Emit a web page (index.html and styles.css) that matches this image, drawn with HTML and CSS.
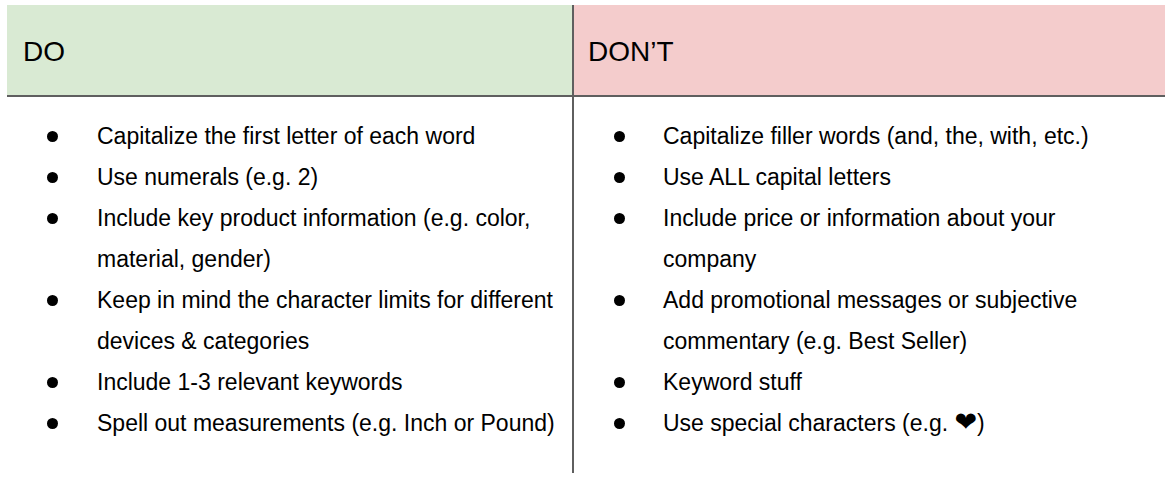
FILE: index.html
```html
<!DOCTYPE html>
<html>
<head>
<meta charset="utf-8">
<link rel="stylesheet" href="styles.css">
</head>
<body>
<div class="table">
  <div class="head head-do">DO</div>
  <div class="head head-dont">DON’T</div>
  <div class="cell cell-do">
    <ul class="list">
      <li>Capitalize the first letter of each word</li>
      <li>Use numerals (e.g. 2)</li>
      <li>Include key product information (e.g. color, material, gender)</li>
      <li>Keep in mind the character limits for different devices &amp; categories</li>
      <li>Include 1-3 relevant keywords</li>
      <li>Spell out measurements (e.g. Inch or Pound)</li>
    </ul>
  </div>
  <div class="cell cell-dont">
    <ul class="list">
      <li>Capitalize filler words (and, the, with, etc.)</li>
      <li>Use ALL capital letters</li>
      <li>Include price or information about your company</li>
      <li>Add promotional messages or subjective commentary (e.g. Best Seller)</li>
      <li>Keyword stuff</li>
      <li>Use special characters (e.g. <span class="heart">❤&#xFE0E;</span>)</li>
    </ul>
  </div>
</div>
</body>
</html>
```

FILE: styles.css
```css
html, body {
  margin: 0;
  padding: 0;
  background: #ffffff;
}
body {
  font-family: "Liberation Sans", Arial, sans-serif;
  color: #000;
}
.table {
  display: grid;
  grid-template-columns: 566px 593px;
  margin: 5px 0 0 6px;
  width: 1159px;
}
.head {
  box-sizing: border-box;
  height: 92px;
  display: flex;
  align-items: center;
  padding-top: 4px;
  padding-left: 16px;
  font-size: 28px;
  border-bottom: 2px solid #5f5f5f;
}
.head-do {
  background: #d9ead3;
  margin-left: 1px;
}
.head-dont {
  background: #f4cccc;
  border-left: 2px solid #5f5f5f;
  padding-left: 14px;
}
.cell {
  padding: 19px 0 29px 0;
}
.cell-dont {
  border-left: 2px solid #5f5f5f;
}
.list {
  list-style: none;
  margin: 0;
  padding: 0;
}
.list li {
  position: relative;
  font-size: 23px;
  line-height: 41px;
  padding-left: 91px;
  width: 475px;
}
.cell-dont .list li {
  padding-left: 89px;
  width: 445px;
}
.list li::before {
  content: "";
  position: absolute;
  left: 41px;
  top: 15px;
  width: 11px;
  height: 11px;
  border-radius: 50%;
  background: #000;
}
.cell-dont .list li::before {
  left: 40px;
}
.heart {
  font-family: "DejaVu Sans", sans-serif;
  font-size: 27px;
  line-height: 1;
}
```
